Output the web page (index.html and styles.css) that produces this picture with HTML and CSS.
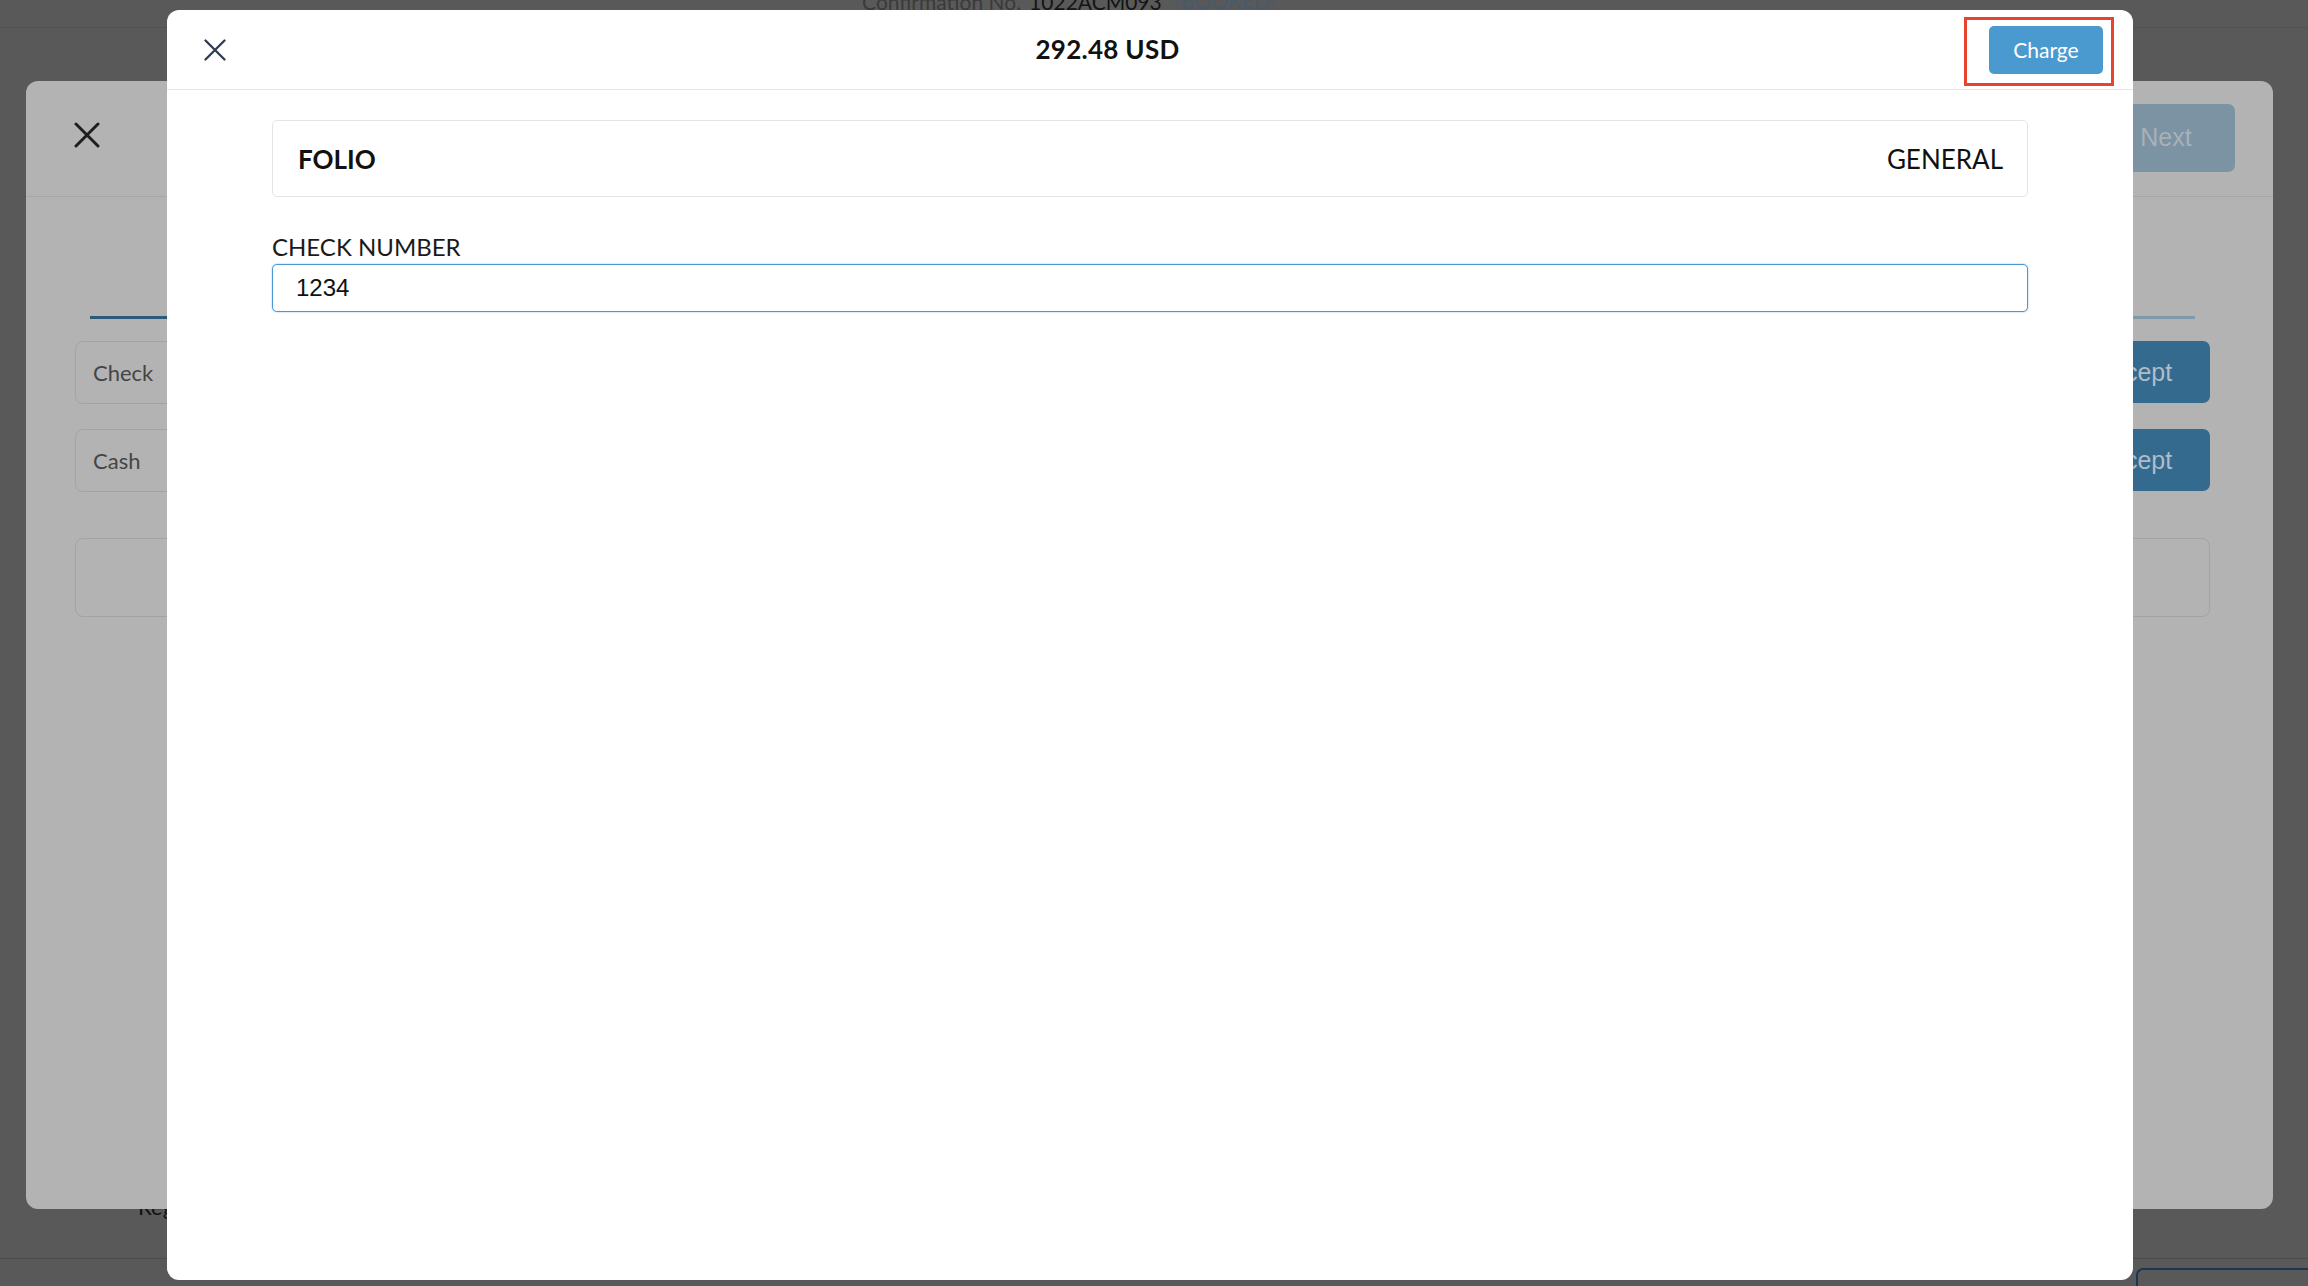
FILE: index.html
```html
<!DOCTYPE html>
<html lang="en">
<head>
  <meta charset="UTF-8" />
  <meta name="viewport" content="width=device-width, initial-scale=1" />
  <title>Payment - Check</title>
  <link rel="stylesheet" href="styles.css">
</head>
<body>
  <div class="page">
    <div class="page-header">
      <span class="conf-label">Confirmation No.</span>
      <span class="conf-number">1022ACM093</span>
      <span class="conf-status">BOOKED</span>
    </div>
    <div class="page-main">
      <div class="page-note">Registration Card</div>
    </div>
    <div class="page-footer">
      <div class="footer-btn"></div>
    </div>
  </div>

  <!-- payment method modal (behind) -->
  <div class="modal modal-back">
    <div class="back-header">
      <svg class="icon-close-lg" viewBox="0 0 26 26" width="26" height="26">
        <path d="M2 2 L24 24 M24 2 L2 24" stroke="#1f1f1f" stroke-width="3" stroke-linecap="round" fill="none"/>
      </svg>
      <button class="btn-next">Next</button>
    </div>
    <div class="back-body">
      <div class="tabs">
        <div class="tab tab-active"></div>
        <div class="tab"></div>
      </div>
      <div class="method-row">
        <div class="method-box">Check</div>
        <button class="btn-accept">Accept</button>
      </div>
      <div class="method-row">
        <div class="method-box">Cash</div>
        <button class="btn-accept">Accept</button>
      </div>
      <div class="method-extra"></div>
    </div>
  </div>

  <!-- check charge modal (front) -->
  <div class="modal modal-front">
    <div class="front-header">
      <svg class="icon-close" viewBox="0 0 22 22" width="22" height="22">
        <path d="M1.5 1.5 L20.5 20.5 M20.5 1.5 L1.5 20.5" stroke="#2c3e50" stroke-width="2.3" stroke-linecap="round" fill="none"/>
      </svg>
      <div class="amount">292.48 USD</div>
      <button class="btn-charge">Charge</button>
    </div>
    <div class="front-body">
      <div class="folio-box">
        <span class="folio-label">FOLIO</span>
        <span class="folio-value">GENERAL</span>
      </div>
      <label class="field-label" for="checkNumber">CHECK NUMBER</label>
      <input class="field-input" type="text" id="checkNumber" value="1234" />
    </div>
    <div class="highlight"></div>
  </div>
</body>
</html>
```

FILE: styles.css
```css
body {
  margin: 0;
  background-color: #595959;
  font-family: 'Lato', 'Noto Sans', sans-serif;
  color: #111;
  overflow: hidden;
}
.page {
  height: 100vh;
  display: flex;
  flex-direction: column;
}
.page-header {
  height: 27px;
  border-bottom: 1px solid #525252;
  display: flex;
  justify-content: center;
  align-items: flex-end;
  font-size: 21px;
  line-height: 24px;
  overflow: hidden;
  padding-right: 171px;
}
.page-header span {
  margin-bottom: 13px;
}
.conf-label {
  color: #3a3a3a;
  margin-right: 8px;
}
.conf-number {
  color: #141414;
  margin-right: 14px;
}
.conf-status {
  color: #475a6c;
  border: 1px solid #475a6c;
  border-radius: 12px;
  padding: 0 4px;
}
.page-main {
  flex: 1;
  display: flex;
  align-items: flex-end;
  padding: 0 0 38px 138px;
}
.page-note {
  font-size: 22px;
  color: #111;
}
.page-footer {
  height: 27px;
  border-top: 1px solid #4b4b4b;
  display: flex;
  justify-content: flex-end;
  align-items: flex-end;
}
.footer-btn {
  width: 170px;
  height: 16px;
  border: 2px solid #1c3550;
  border-bottom: none;
  border-right: none;
  border-radius: 7px 0 0 0;
}

.modal {
  position: absolute;
  border-radius: 12px;
  box-sizing: border-box;
}
.modal-back {
  left: 26px;
  top: 81px;
  width: 2247px;
  height: 1128px;
  background-color: #b3b3b3;
}
.back-header {
  height: 115px;
  border-bottom: 1px solid #a6a6a6;
  display: flex;
  justify-content: space-between;
  align-items: center;
  padding: 0 38px 0 48px;
}
.icon-close-lg {
  display: block;
  margin-top: -8px;
}
.btn-next {
  width: 138px;
  height: 68px;
  border: none;
  border-radius: 7px;
  background-color: #7b93a3;
  color: #a8b1b8;
  font-family: 'Liberation Sans', Arial, sans-serif;
  font-size: 25px;
  margin-top: -2px;
}
.back-body {
  padding: 0 63px 0 49px;
}
.tabs {
  display: flex;
  margin: 119px 15px 22px;
}
.tab {
  flex: 1;
  height: 3px;
  background-color: #7f9aab;
}
.tab-active {
  background-color: #2e5a7a;
}
.method-row {
  display: flex;
  gap: 16px;
  margin-bottom: 25px;
}
.method-box {
  flex: 1;
  height: 63px;
  box-sizing: border-box;
  border: 1px solid #a3a3a3;
  border-radius: 8px;
  display: flex;
  align-items: center;
  padding-left: 17px;
  font-size: 22px;
  color: #454545;
}
.btn-accept {
  width: 146px;
  height: 62px;
  border: none;
  border-radius: 7px;
  background-color: #356a8f;
  color: #aebdc8;
  font-family: 'Liberation Sans', Arial, sans-serif;
  font-size: 25px;
  padding: 0 6px 0 0;
}
.method-extra {
  height: 79px;
  box-sizing: border-box;
  margin-top: 46px;
  border: 1px solid #a3a3a3;
  border-radius: 8px;
}

.modal-front {
  left: 167px;
  top: 10px;
  width: 1966px;
  height: 1270px;
  background-color: #fff;
}
.front-header {
  height: 79px;
  border-bottom: 1px solid #e6e6e6;
  display: flex;
  justify-content: space-between;
  align-items: center;
  padding: 0 30px 0 37px;
}
.icon-close {
  display: block;
}
.amount {
  font-size: 26px;
  font-weight: 700;
  letter-spacing: 0.3px;
  color: #111;
  margin-top: -2px;
}
.btn-charge {
  width: 114px;
  height: 48px;
  border: none;
  border-radius: 5px;
  background-color: #4a9ad0;
  color: #fff;
  font-family: inherit;
  font-size: 21px;
}
.front-body {
  padding: 30px 105px 0;
}
.folio-box {
  height: 77px;
  box-sizing: border-box;
  border: 1px solid #e4e4e4;
  border-radius: 5px;
  display: flex;
  justify-content: space-between;
  align-items: center;
  padding: 0 24px 0 25px;
  font-size: 26px;
  color: #111;
}
.folio-label {
  font-weight: 700;
}
.field-label {
  display: block;
  margin: 36px 0 3px;
  font-size: 24px;
  line-height: 28px;
  color: #1a1a1a;
}
.field-input {
  display: block;
  width: 100%;
  height: 48px;
  box-sizing: border-box;
  border: 1px solid #4a98d3;
  border-radius: 5px;
  box-shadow: 0 0 2px rgba(74, 152, 211, 0.6);
  padding: 0 23px;
  font-family: 'Liberation Sans', Arial, sans-serif;
  font-size: 24px;
  color: #111;
  outline: none;
}
.highlight {
  position: absolute;
  left: 1797px;
  top: 7px;
  width: 150px;
  height: 69px;
  box-sizing: border-box;
  border: 3px solid #e8432d;
}
```
